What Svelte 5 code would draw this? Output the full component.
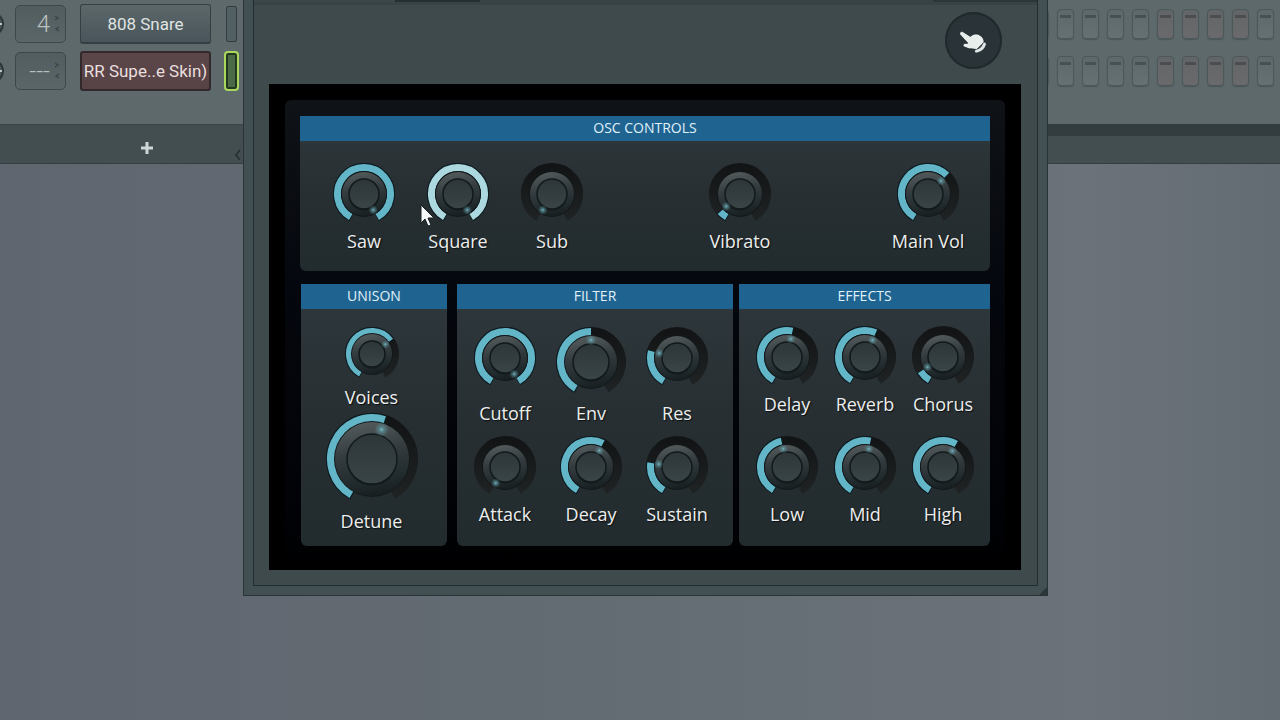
<script>
  const SWEEP = 150;

  const sizes = {
    small: { size: 54, band: 6, body: 20, cap: 13 },
    medium: { size: 62, band: 7, body: 22, cap: 15 },
    large: { size: 70, band: 8, body: 26, cap: 18 },
    huge: { size: 92, band: 10, body: 37, cap: 25 },
  };

  let osc = $state([
    { name: 'Saw', value: 100, kind: 'medium' },
    { name: 'Square', value: 100, kind: 'medium', active: true },
    { name: 'Sub', value: 0, kind: 'medium' },
    { name: 'Vibrato', value: 6, kind: 'medium' },
    { name: 'Main Vol', value: 65, kind: 'medium' },
  ]);
  let unison = $state([
    { name: 'Voices', value: 68, kind: 'small' },
    { name: 'Detune', value: 56, kind: 'huge' },
  ]);
  let filter = $state([
    { name: 'Cutoff', value: 100, kind: 'medium' },
    { name: 'Env', value: 50, kind: 'large' },
    { name: 'Res', value: 25, kind: 'medium' },
    { name: 'Attack', value: 0, kind: 'medium' },
    { name: 'Decay', value: 59, kind: 'medium' },
    { name: 'Sustain', value: 23, kind: 'medium' },
  ]);
  let effects = $state([
    { name: 'Delay', value: 54, kind: 'medium' },
    { name: 'Reverb', value: 58, kind: 'medium' },
    { name: 'Chorus', value: 9, kind: 'medium' },
    { name: 'Low', value: 46, kind: 'medium' },
    { name: 'Mid', value: 54, kind: 'medium' },
    { name: 'High', value: 60, kind: 'medium' },
  ]);

  const channels = [
    { track: '4', name: '808 Snare', selected: false },
    { track: '---', name: 'RR Supe..e Skin)', selected: true },
  ];
  const steps = [0, 0, 0, 0, 0, 1, 1, 1, 1, 0];

  function point(c, r, deg) {
    const a = (deg * Math.PI) / 180;
    return [c + r * Math.sin(a), c - r * Math.cos(a)];
  }

  function arc(c, r, from, to) {
    const [x1, y1] = point(c, r, from);
    const [x2, y2] = point(c, r, to);
    return `M${x1} ${y1}A${r} ${r} 0 ${to - from > 180 ? 1 : 0} 1 ${x2} ${y2}`;
  }
</script>

{#snippet dial(k)}
  {@const s = sizes[k.kind]}
  {@const c = s.size / 2}
  {@const r = c - 1 - s.band / 2}
  {@const angle = -SWEEP + (k.value / 100) * SWEEP * 2}
  {@const dot = point(c, (s.body + s.cap) / 2, angle)}
  {@const id = k.name.replace(' ', '')}
  <label class="knob" class:active={k.active}>
    <span class="dial">
      <svg width={s.size} height={s.size} viewBox="0 0 {s.size} {s.size}" aria-hidden="true">
        <defs>
          <linearGradient id="track-{id}" x1="0" y1="0" x2="0" y2="1">
            <stop offset="0" stop-color="#121415" />
            <stop offset="1" stop-color="#1f2223" />
          </linearGradient>
          <linearGradient id="body-{id}" x1="0.4" y1="0" x2="0.6" y2="1">
            <stop offset="0" stop-color="#535a5c" />
            <stop offset="0.4" stop-color="#343c3f" />
            <stop offset="0.8" stop-color="#20292c" />
            <stop offset="1" stop-color="#171e20" />
          </linearGradient>
          <linearGradient id="cap-{id}" x1="0" y1="0" x2="0" y2="1">
            <stop offset="0" stop-color="#2d3639" />
            <stop offset="1" stop-color="#3a4548" />
          </linearGradient>
          <radialGradient id="glow-{id}">
            <stop offset="0" stop-color="#7cc0cb" stop-opacity="0.95" />
            <stop offset="0.35" stop-color="#5f9ba5" stop-opacity="0.6" />
            <stop offset="1" stop-color="#5f9ba5" stop-opacity="0" />
          </radialGradient>
        </defs>
        <path d={arc(c, r, -SWEEP, SWEEP)} fill="none" stroke="url(#track-{id})" stroke-width={s.band + 2} />
        {#if k.value > 0}
          <path d={arc(c, r, -SWEEP - 2, angle + 1)} fill="none" stroke="#0d1c22" stroke-width={s.band + 2} />
          <path class="level" d={arc(c, r, -SWEEP, angle)} fill="none" stroke-width={s.band} />
        {/if}
        <circle cx={c} cy={c} r={s.body + 1} fill="#14191b" />
        <circle cx={c} cy={c} r={s.body} fill="url(#body-{id})" />
        <circle cx={c} cy={c + 2} r={s.cap} fill="#151b1d" opacity="0.6" />
        <circle cx={c} cy={c} r={s.cap} fill="url(#cap-{id})" stroke="#12191b" stroke-width="1.5" />
        <circle cx={dot[0]} cy={dot[1]} r={s.cap / 4 + 1} fill="url(#glow-{id})" />
      </svg>
      <input type="range" min="0" max="100" bind:value={k.value} />
    </span>
    <span class="name">{k.name}</span>
  </label>
{/snippet}

<div class="desktop">
  <section class="rack">
    <div class="channels">
      {#each channels as ch}
        <div class="channel">
          <span class="pan"></span>
          <button class="track" aria-label="Mixer track {ch.track}">
            <span>{ch.track}</span>
            <svg width="6" height="20" viewBox="0 0 6 20" fill="none" stroke="#3b4648" stroke-width="1.5" aria-hidden="true">
              <path d="M1 2l3 2-3 2M5 13l-3 2 3 2" />
            </svg>
          </button>
          <button class="channel-name" class:selected={ch.selected}>{ch.name}</button>
          <button class="led" class:lit={ch.selected} aria-label="Select {ch.name}"></button>
          <div class="steps">
            {#each steps as tint, i}
              <button class="step" class:warm={tint} aria-label="Step {i + 1}"></button>
            {/each}
          </div>
        </div>
      {/each}
    </div>
    <div class="rack-foot">
      <div class="foot-left">
        <button class="add" aria-label="Add channel">
          <svg width="14" height="14" viewBox="0 0 14 14" aria-hidden="true">
            <path d="M7 1v12M1 7h12" stroke="#cfd6d6" stroke-width="3" />
          </svg>
        </button>
        <svg class="fold" width="6" height="12" viewBox="0 0 6 12" aria-hidden="true">
          <path d="M5 1L1 6l4 5" fill="none" stroke="#252e31" stroke-width="1.5" />
        </svg>
      </div>
      <div class="foot-right"></div>
    </div>
  </section>

  <main class="plugin">
    <div class="frame">
      <div class="tabs"><i></i><i class="dark"></i><i class="end"></i></div>
      <header>
        <button class="hand" aria-label="Touch control">
          <svg width="57" height="57" viewBox="75 35 172 172" aria-hidden="true">
            <path
              d="M120 103C117 97 123 92 130 95L152 109C158 102 170 98 180 105C188 109 193 117 193 126L171 148C162 148 156 145 148 146L132 140C127 136 131 129 137 130L144 129Z"
              fill="#e8eeec" stroke="#11191c" stroke-width="2" />
            <path d="M170 153Q188 149 194 132" fill="none" stroke="#3c474b" stroke-width="12" stroke-linecap="round" />
            <path d="M170 153Q188 149 194 132" fill="none" stroke="#dfe6e5" stroke-width="9" stroke-linecap="round" />
          </svg>
        </button>
      </header>
      <div class="screen">
        <div class="skin">
          <section class="panel osc">
            <h2>OSC CONTROLS</h2>
            <div class="grid">{#each osc as k}{@render dial(k)}{/each}</div>
          </section>
          <div class="lower">
            <section class="panel unison">
              <h2>UNISON</h2>
              <div class="grid">{#each unison as k}{@render dial(k)}{/each}</div>
            </section>
            <section class="panel filter">
              <h2>FILTER</h2>
              <div class="grid">{#each filter as k}{@render dial(k)}{/each}</div>
            </section>
            <section class="panel effects">
              <h2>EFFECTS</h2>
              <div class="grid">{#each effects as k}{@render dial(k)}{/each}</div>
            </section>
          </div>
        </div>
      </div>
    </div>
    <svg class="grip" width="8" height="8" viewBox="0 0 8 8" aria-hidden="true"><path d="M8 0v8H0z" fill="#2b3639" /></svg>
  </main>

  <svg class="cursor" width="16" height="24" viewBox="0 0 16 24" aria-hidden="true">
    <path d="M1 1v18l4-4 3 7 3-1-3-7h6z" fill="#f6f8f8" stroke="#1a2023" stroke-width="1" />
  </svg>
</div>

<style>
  :global(body) {
    margin: 0;
    background: #636b73;
  }

  .desktop {
    position: relative;
    min-height: 100vh;
    overflow: hidden;
    background: linear-gradient(90deg, #60666f, #636b73 45%, #6b727a 85%, #636b73);
    font-family: "Open Sans", "Noto Sans", sans-serif;
  }

  button {
    padding: 0;
    border: 0;
    background: none;
    color: inherit;
    font: inherit;
  }

  .channels {
    display: grid;
    gap: 7px;
    padding: 4px 0 33px;
    background: #5e696b;
  }

  .channel {
    display: flex;
    align-items: center;
    height: 40px;
    overflow: hidden;
    font-family: Roboto, sans-serif;
  }

  .pan {
    width: 24px;
    height: 24px;
    margin: 0 11px 0 -20px;
    box-sizing: border-box;
    border: 2px solid #2e383a;
    border-radius: 50%;
    background: linear-gradient(#4b5658 45%, #c3cacb 45%, #c3cacb 55%, #4b5658 55%);
  }

  .track {
    display: flex;
    align-items: center;
    justify-content: flex-end;
    gap: 4px;
    width: 51px;
    height: 38px;
    padding-right: 5px;
    box-sizing: border-box;
    border: 1px solid #3d484a;
    border-radius: 5px;
    background: linear-gradient(#515d5f, #5a6668);
    color: #b9c0c0;
    font-size: 24px;
    font-weight: 300;
  }

  .channel-name {
    width: 131px;
    height: 40px;
    margin: 0 15px 0 14px;
    border: 1px solid #353f42;
    border-bottom-width: 2px;
    border-radius: 3px;
    background: linear-gradient(#5b6769, #49555a);
    color: #dfe4e3;
    font-size: 17px;
    white-space: nowrap;
  }

  .channel-name.selected {
    border: 2px solid #33282c;
    background: linear-gradient(#5b474a, #574246);
    color: #e9dfde;
  }

  .led {
    width: 11px;
    height: 36px;
    border: 1px solid #333d40;
    border-radius: 2px;
    background: #526063;
  }

  .led.lit {
    border: 2px solid #24381f;
    background: #4a6a48;
    outline: 2px solid #a9d85c;
  }

  .steps {
    display: flex;
    gap: 8px;
    margin-left: auto;
    padding-right: 6px;
  }

  .step {
    width: 17px;
    height: 30px;
    border: 1px solid #4c5759;
    border-radius: 4px;
    background:
      linear-gradient(#465154, #465154) center 5px / 11px 3px no-repeat,
      linear-gradient(#5d686a, #667173);
    box-shadow: 0 1px 1px #4c5759;
  }

  .step.warm {
    background:
      linear-gradient(#4b4d50, #4b4d50) center 5px / 11px 3px no-repeat,
      linear-gradient(#626567, #6a6a6c);
  }

  .rack-foot {
    display: flex;
    height: 40px;
    box-sizing: border-box;
    border-bottom: 1px solid #343e41;
    background: #434e51;
  }

  .foot-left {
    display: flex;
    align-items: center;
    justify-content: flex-end;
    width: 243px;
    border-top: 1px solid #39444a;
    box-sizing: border-box;
  }

  .add {
    display: flex;
    padding: 10px;
    margin: 8px 71px 0 0;
  }

  .fold {
    margin: 22px 2px 0 0;
    flex: none;
  }

  .foot-right {
    flex: 1;
    border-top: 12px solid #333d40;
  }

  .plugin {
    position: absolute;
    top: 0;
    left: 243px;
    right: 232px;
    padding: 0 9px 9px;
    border: 1px solid #2a3437;
    border-top: 0;
    background: #435053;
    box-sizing: border-box;
  }

  .frame {
    padding: 0 16px 15px 15px;
    border: 1px solid #232c2f;
    border-top: 0;
    background: #3f4a4c;
  }

  .tabs {
    display: flex;
    height: 5px;
    margin: 0 -16px 0 -15px;
    background: #384346;
  }

  .tabs i {
    width: 141px;
    height: 2px;
    background: #3d484b;
  }

  .tabs .dark {
    width: 85px;
    background: #252f32;
  }

  .tabs .end {
    width: 104px;
    margin-left: auto;
    background: #2b3639;
  }

  header {
    display: flex;
    justify-content: flex-end;
    height: 79px;
    padding: 7px 19px 0 0;
    box-sizing: border-box;
  }

  .hand {
    width: 57px;
    height: 57px;
    border-radius: 50%;
    background: #2a3438;
    box-shadow: inset 0 0 0 2px #20292c;
  }

  .hand svg {
    display: block;
  }

  .screen {
    padding: 16px 16px 0;
    background: #000;
  }

  .skin {
    display: grid;
    gap: 13px;
    padding: 16px 15px 24px;
    border-radius: 6px 6px 0 0;
    background: linear-gradient(#0f1216, #05070e 40%, #010206 90%, #000);
  }

  .panel {
    border-radius: 0 0 6px 6px;
    background: linear-gradient(#2f383c, #272f33 50%, #222b2e);
    min-width: 0;
  }

  h2 {
    margin: 0;
    height: 25px;
    background: #1f6491;
    color: #e0f1fa;
    font-size: 14px;
    font-weight: 400;
    line-height: 24px;
    text-align: center;
  }

  .grid {
    display: grid;
  }

  .osc .grid {
    grid-template-columns: repeat(7, 1fr);
    padding: 22px 15px 18px 17px;
  }

  .osc .knob:nth-child(4) {
    grid-column: 5;
  }

  .osc .knob:nth-child(5) {
    grid-column: 7;
  }

  .lower {
    display: flex;
    gap: 6px;
    padding-left: 1px;
  }

  .unison {
    flex: 146 1 0;
    margin-right: 4px;
  }

  .filter {
    flex: 276 1 0;
  }

  .effects {
    flex: 251 1 0;
  }

  .unison .grid {
    gap: 4px;
    padding: 18px 5px 0 0;
  }

  .filter .grid {
    grid-template-columns: repeat(3, 1fr);
    gap: 11px 0;
    padding: 18px 13px 20px 5px;
  }

  .effects .grid {
    grid-template-columns: repeat(3, 1fr);
    gap: 20px 0;
    padding: 17px 8px 0 9px;
  }

  .knob {
    display: flex;
    flex-direction: column;
    align-items: center;
    justify-content: space-between;
    gap: 4px;
  }

  .dial {
    position: relative;
    display: flex;
  }

  .dial input {
    position: absolute;
    inset: 0;
    width: 100%;
    height: 100%;
    margin: 0;
    opacity: 0;
    cursor: pointer;
  }

  .level {
    stroke: #63b6c8;
  }

  .active .level {
    stroke: #acd9e0;
  }

  .name {
    color: #eceeed;
    font-size: 18px;
    line-height: 24px;
    white-space: nowrap;
    text-shadow: 1px 1px 1px #0b0f11;
  }

  .grip {
    position: absolute;
    right: 0;
    bottom: 0;
  }

  .cursor {
    position: absolute;
    left: 420px;
    top: 204px;
  }
</style>
